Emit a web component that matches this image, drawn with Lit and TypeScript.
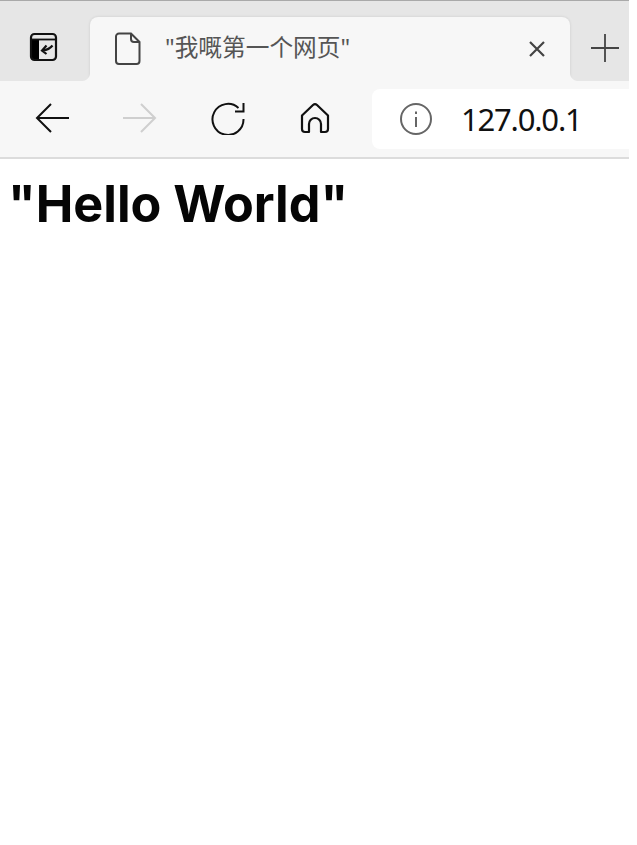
import { LitElement, css, html } from "lit";
import { customElement } from "lit/decorators.js";

@customElement("app-root")
export class AppRoot extends LitElement {
  static styles = css`
    :host {
      display: block;
      width: 629px;
      height: 845px;
      background: #fff;
      font-family: "Noto Sans", "Noto Sans CJK SC", sans-serif;
    }

    svg {
      display: block;
      flex: none;
      fill: none;
    }

    .chrome {
      border-top: 1px solid #a9a9a9;
    }

    .tabstrip {
      display: flex;
      align-items: flex-end;
      height: 80px;
      background: #e6e6e6;
    }

    .pinned {
      display: flex;
      justify-content: center;
      align-items: center;
      width: 90px;
      height: 64px;
      padding: 0 3px 4px 0;
      box-sizing: border-box;
    }

    .tab {
      display: flex;
      align-items: center;
      width: 480px;
      height: 64px;
      padding: 0 23px 0 25px;
      box-sizing: border-box;
      background: #f7f7f7;
      border-radius: 8px 8px 0 0;
      box-shadow: 0 0 3px rgba(0, 0, 0, 0.12);
      position: relative;
    }

    .tab::before,
    .tab::after {
      content: "";
      position: absolute;
      bottom: 0;
      width: 8px;
      height: 8px;
    }

    .tab::before {
      left: -8px;
      background: radial-gradient(circle at 0 0, transparent 7.5px, #f7f7f7 8.5px);
    }

    .tab::after {
      right: -8px;
      background: radial-gradient(circle at 100% 0, transparent 7.5px, #f7f7f7 8.5px);
    }

    .title {
      flex: 1;
      margin: 0 0 6px 24px;
      font-size: 23.7px;
      color: #555;
      white-space: nowrap;
    }

    .new-tab {
      display: flex;
      justify-content: center;
      width: 59px;
      height: 64px;
      padding: 17px 0 0 11px;
      box-sizing: border-box;
    }

    .toolbar {
      display: flex;
      align-items: center;
      height: 76px;
      padding-left: 35px;
      background: #f7f7f7;
      border-bottom: 2px solid #dcdcdc;
      position: relative;
    }

    .nav {
      display: flex;
      align-items: center;
      gap: 54px;
      margin: 0 41px 2px 0;
    }

    .address {
      display: flex;
      align-items: center;
      flex: 1;
      height: 60px;
      padding-left: 28px;
      background: #fff;
      border-radius: 8px 0 0 8px;
    }

    .url {
      margin-left: 29px;
      font-size: 31px;
      letter-spacing: -1.2px;
      color: #111;
    }

    h1 {
      margin: 0;
      padding: 12px 0 0 8px;
      font-family: Inter, "Noto Sans", sans-serif;
      font-size: 50.3px;
      line-height: 66px;
      font-weight: 700;
      color: #050505;
      white-space: nowrap;
    }
  `;

  render() {
    return html`
      <div class="chrome">
        <div class="tabstrip">
          <div class="pinned">
            <svg width="30" height="30" viewBox="0 0 30 30">
              <path d="M2 7V25a3 3 0 0 0 3 3h5V7z" fill="#000" />
              <rect x="2" y="2" width="25" height="26" rx="3.5" stroke="#111" stroke-width="2.2" />
              <path d="M2 7.500H27" stroke="#111" stroke-width="1.800" />
              <path d="M23.500 13.500C21 16.500 18 18 14 18.500M17.500 13.500L13 18.500L17.500 22" stroke="#111" stroke-width="2.200" />
            </svg>
          </div>
          <div class="tab">
            <svg width="26" height="34" viewBox="0 0 26 34">
              <path
                d="M4 1.500H16L24.500 10V29a3 3 0 0 1-3 3H4a3 3 0 0 1-3-3V4.500a3 3 0 0 1 3-3zM16 1.500V7a3 3 0 0 0 3 3h5.500"
                stroke="#444"
                stroke-width="2"
              />
            </svg>
            <span class="title">"我嘅第一个网页"</span>
            <svg width="20" height="20" viewBox="0 0 20 20">
              <path d="M3 3L17 17M17 3L3 17" stroke="#444" stroke-width="2.200" />
            </svg>
          </div>
          <div class="new-tab">
            <svg width="28" height="28" viewBox="0 0 28 28">
              <path d="M14 0V28M0 14H28" stroke="#444" stroke-width="1.800" />
            </svg>
          </div>
        </div>
        <div class="toolbar">
          <div class="nav">
            <svg width="34" height="30" viewBox="0 0 34 30">
              <path d="M34 15H2M16 1L2 15L16 29" stroke="#111" stroke-width="2" />
            </svg>
            <svg width="34" height="30" viewBox="0 0 34 30">
              <path d="M0 15H32M18 1L32 15L18 29" stroke="#cfcfcf" stroke-width="2" />
            </svg>
            <svg width="34" height="34" viewBox="0 0 34 34">
              <path
                d="M27.500 7A15.500 15.500 0 1 0 32.500 18M32.500 2V10.500H24"
                stroke="#111"
                stroke-width="2"
              />
            </svg>
            <svg width="32" height="32" viewBox="0 0 32 32">
              <path
                d="M3 13.500L14 3a3 3 0 0 1 4 0L29 13.500V27a3 3 0 0 1-3 3H22V22a6 6 0 0 0-12 0V30H6a3 3 0 0 1-3-3z"
                stroke="#111"
                stroke-width="2.200"
                stroke-linejoin="round"
              />
            </svg>
          </div>
          <div class="address">
            <svg width="32" height="32" viewBox="0 0 32 32">
              <circle cx="16" cy="16" r="15" stroke="#666" stroke-width="2" />
              <path d="M16 14V24M16 8.500V11" stroke="#666" stroke-width="2" />
            </svg>
            <span class="url">127.0.0.1</span>
          </div>
        </div>
      </div>
      <h1>"Hello World"</h1>
    `;
  }
}
